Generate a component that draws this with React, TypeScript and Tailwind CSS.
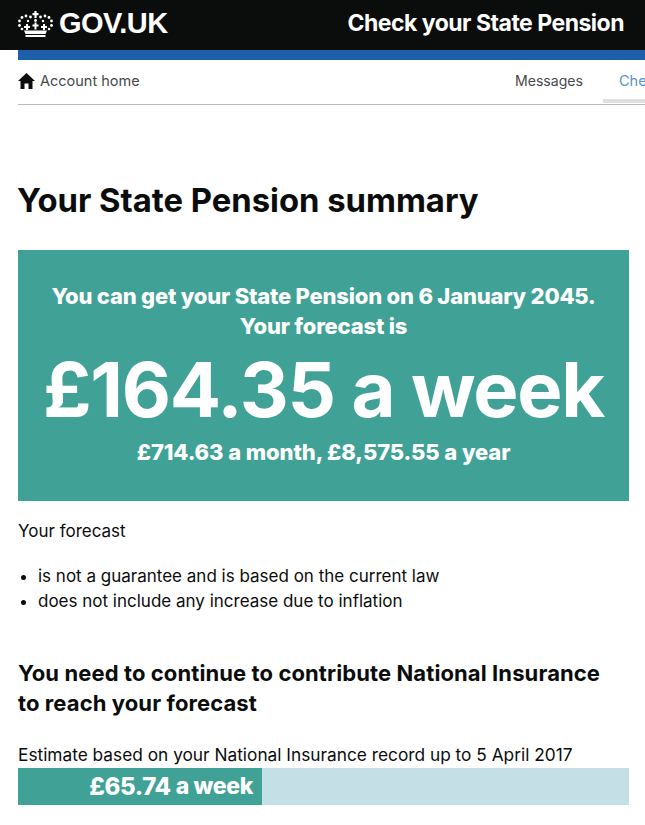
import React from 'react';

const font = { fontFamily: 'Inter' };

function Crown() {
  return (
    <svg width="35" height="26" viewBox="0 0 35 26" fill="#fff" className="shrink-0">
      <rect x="16.4" y="0" width="2.2" height="7" />
      <rect x="14.5" y="2" width="6" height="2.2" />
      {/* top row of dots, arching out from the cross */}
      <circle cx="12.5" cy="6" r="1.4" />
      <circle cx="22.5" cy="6" r="1.4" />
      <circle cx="8" cy="5" r="1.4" />
      <circle cx="27" cy="5" r="1.4" />
      <circle cx="4" cy="6.5" r="1.4" />
      <circle cx="31" cy="6.5" r="1.4" />
      <circle cx="1.5" cy="10" r="1.4" />
      <circle cx="33.5" cy="10" r="1.4" />
      <circle cx="1.5" cy="14.5" r="1.4" />
      <circle cx="33.5" cy="14.5" r="1.4" />
      <circle cx="4" cy="18" r="1.3" />
      <circle cx="31" cy="18" r="1.3" />
      <circle cx="17.5" cy="9.5" r="1.4" />
      <circle cx="10" cy="10" r="1.2" />
      <circle cx="25" cy="10" r="1.2" />
      {/* three small crosses above the band */}
      <path d="M16.5 11.5h2v2h2v2h-2v3h-2v-3h-2v-2h2z" />
      <path d="M8 13h2v2h2v2h-2v2h-2v-2H6v-2h2z" />
      <path d="M25 13h2v2h2v2h-2v2h-2v-2h-2v-2h2z" />
      <path d="M6 19.5 L29 19.5 L27.5 23 L7.5 23 Z" />
      <rect x="7.5" y="24" width="20" height="2" />
    </svg>
  );
}

function HomeIcon() {
  return (
    <svg width="17" height="16" viewBox="0 0 17 16" fill="#0b0c0c" className="shrink-0">
      <path d="M8.5 0 L17 8 L14.5 8 L14.5 16 L10.5 16 L10.5 10.5 L6.5 10.5 L6.5 16 L2.5 16 L2.5 8 L0 8 Z" />
    </svg>
  );
}

export default function App() {
  return (
    <div className="w-[645px] h-[825px] overflow-hidden bg-white text-[#0b0c0c]" style={font}>
      <header className="h-[50px] bg-[#0b0c0c] text-white flex items-center justify-between pl-[18px] pr-[21px] pb-[3px]">
        <div className="flex items-center gap-[6px]">
          <Crown />
          <span className="text-[29px] font-bold tracking-[-0.5px] font-['Liberation_Sans']">GOV.UK</span>
        </div>
        <span className="text-[23px] font-bold tracking-[-0.5px]">Check your State Pension</span>
      </header>

      <div className="ml-[18px]">
        <div className="h-[10px] bg-[#1d5fa8]" />
        <nav className="h-[45px] border-b border-[#bbbbbb] flex justify-between items-center text-[14.5px] pb-[2px]">
          <a className="flex items-center gap-[5px] text-[#454a4c]">
            <HomeIcon />
            Account home
          </a>
          <div className="flex h-full items-center whitespace-nowrap">
            <a className="text-[#454a4c] text-[14.1px] mr-[20px]">Messages</a>
            <a className="h-[44px] w-[42px] overflow-hidden flex items-center pl-[16px] text-[#5694ca] border-b-4 border-[#dee0e2] pt-[4px] box-border">Check</a>
          </div>
        </nav>
      </div>

      <main className="px-[18px] w-[629px] box-content">
        <h1 className="mt-[74px] -ml-px text-[32.8px] leading-[42px] font-bold">Your State Pension summary</h1>

        <section className="mt-[29px] w-[611px] h-[251px] bg-[#40a296] text-white text-center pt-[31px]">
          <p className="text-[22px] leading-[30px] font-extrabold tracking-[-0.2px]">
            You can get your State Pension on 6 January 2045.
            <br />
            Your forecast is
          </p>
          <p className="mt-[4px] text-[76px] leading-[88px] font-bold tracking-[-1.3px] whitespace-nowrap">£164.35 a week</p>
          <p className="mt-[4px] text-[22px] leading-[30px] font-extrabold tracking-[-0.1px]">£714.63 a month, £8,575.55 a year</p>
        </section>

        <p className="mt-[18px] text-[17px] leading-[24px]">Your forecast</p>
        <ul className="mt-[21px] list-disc pl-[20px] text-[17px] leading-[25px]">
          <li>is not a guarantee and is based on the current law</li>
          <li>does not include any increase due to inflation</li>
        </ul>

        <h2 className="mt-[44px] text-[22px] leading-[30px] font-bold tracking-[0.1px]">
          You need to continue to contribute National Insurance
          <br />
          to reach your forecast
        </h2>

        <p className="mt-[25px] text-[17.3px] leading-[24px] whitespace-nowrap">Estimate based on your National Insurance record up to 5 April 2017</p>
        <div className="mt-[1px] w-[611px] h-[37px] bg-[#c5dfe6]">
          <div className="w-[244px] h-full bg-[#40a296] text-white flex items-center justify-end pr-[9px] font-extrabold text-[23px] tracking-[-0.35px] whitespace-nowrap">
            <span className="text-[24px] mr-[5px]">£65.74</span>a week
          </div>
        </div>
      </main>
    </div>
  );
}
